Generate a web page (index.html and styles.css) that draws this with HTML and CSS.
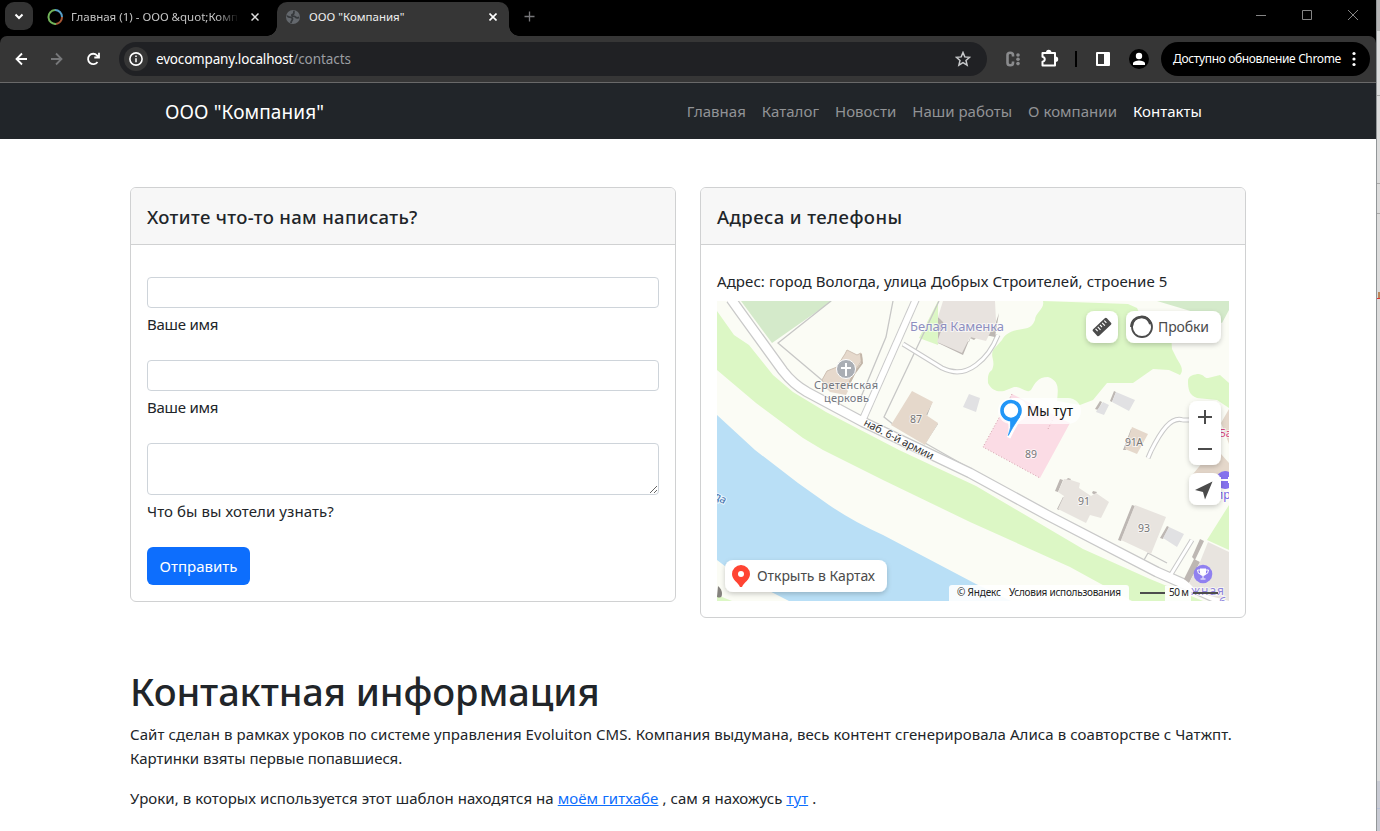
FILE: index.html
```html
<!DOCTYPE html>
<html lang="ru">
<head>
<meta charset="utf-8">
<title>ООО "Компания"</title>
<link rel="stylesheet" href="styles.css">
</head>
<body>
<div class="desktop">
<div class="window">
  <div class="tabstrip">
    <div class="tab-search"><svg width="12" height="12" viewBox="0 0 12 12"><path d="M2.500 4.500 6 8l3.500-3.500" fill="none" stroke="#fff" stroke-width="2"/></svg></div>
    <div class="tab tab-idle">
      <svg width="16" height="16" viewBox="0 0 16 16" fill="none" stroke-width="2"><path d="M8 1a7 7 0 0 1 7 7" stroke="#579fc9"/><path d="M15 8a7 7 0 0 1-6 7" stroke="#a75736"/><path d="M9 15A7 7 0 1 1 8 1" stroke="#72b45a"/></svg>
      <span class="tab-title faded">Главная (1) - ООО &amp;quot;Комп</span>
      <svg class="close" width="8" height="8" viewBox="0 0 8 8"><path d="m.5.5 7 7m0-7-7 7" stroke="#ddd" stroke-width="1.500"/></svg>
    </div>
    <div class="tab tab-active">
      <svg width="14" height="14" viewBox="0 0 14 14"><circle cx="7" cy="7" r="7" fill="#64686d"/><path d="M.8 6.200c1.200-.2 1.800 1 3 1s2.700.3 2.700 1.800-1.500 1.500-1.500 4M8.500 1C7 2 8.500 3 7.500 4s-2 .5-1.500 1.500 2.500 0 3.500 1.500 2 .8 3.700.5" fill="none" stroke="#36393c" stroke-width="1.800"/></svg>
      <span class="tab-title">ООО "Компания"</span>
      <svg class="close" width="8" height="8" viewBox="0 0 8 8"><path d="m.5.5 7 7m0-7-7 7" stroke="#fff" stroke-width="1.600"/></svg>
    </div>
    <svg class="new-tab" width="11" height="11" viewBox="0 0 11 11"><path d="M5.500.5v10M.5 5.500h10" stroke="#77777a" stroke-width="1.300"/></svg>
    <svg class="window-buttons" width="104" height="12" viewBox="0 0 104 12" fill="none" stroke="#858585"><path d="M0 6.500h10M46.500 1.500h9v9h-9zM92 1l10 10m0-10L92 11"/></svg>
  </div>

  <div class="toolbar-back"><div class="toolbar">
    <svg class="nav-icons" width="88" height="16" viewBox="0 0 88 16" fill="none" stroke-width="1.800">
      <path d="M12 8H1.500M7 2.500 1.500 8 7 13.500" stroke="#fff"/>
      <path d="M36 8h10.500M41 2.500 46.500 8 41 13.500" stroke="#77787a"/>
      <path d="M82.500 11A5.200 5.200 0 1 1 82 4.300l1.500 1.700M84 1.800v4.700h-4.700" stroke="#fff"/>
    </svg>
    <div class="omnibox">
      <span class="site-info"><svg width="14" height="14" viewBox="0 0 14 14"><circle cx="7" cy="7" r="6.100" fill="none" stroke="#fff" stroke-width="1.600"/><path d="M7 6.200v4M7 3.500v1.400" stroke="#fff" stroke-width="1.500"/></svg></span>
      <span class="url">evocompany.localhost<i>/contacts</i></span>
      <svg class="star" width="16" height="16" viewBox="0 0 16 16"><path d="m8 1.500 1.800 4.400 4.800.4L11 9.400l1.100 4.700L8 11.600l-4.100 2.500L5 9.400 1.400 6.300l4.800-.4z" fill="none" stroke="#c7c9cb" stroke-width="1.500"/></svg>
    </div>
    <svg class="extensions" width="152" height="22" viewBox="1000 48 152 22" fill="none">
      <path d="M1013 56.500v-1.500c0-3-5.500-3-5.500 0v8c0 3 5.500 3 5.500 0v-1.500" stroke="#8a8b8d" stroke-width="2.600"/>
      <g fill="#8a8b8d"><circle cx="1018" cy="55" r="1.800"/><circle cx="1018" cy="59.300" r="1.800"/><circle cx="1018" cy="63.600" r="1.800"/></g>
      <path d="M1042.500 53h12.500v12.500h-12.500v-3.700c3-.5 3-4.500 0-5z" stroke="#fff" stroke-width="2" stroke-linejoin="round"/>
      <path d="M1046 52.500a2.700 2.700 0 0 1 5.400 0zM1055.500 56.500a2.700 2.700 0 0 1 0 5.400z" fill="#fff"/>
      <path d="M1076 51v16" stroke="#000" stroke-width="2"/>
      <path d="M1097 53h12v12h-12z" stroke="#fff" stroke-width="2" stroke-linejoin="round"/><path d="M1104 53h5v12h-5z" fill="#fff"/>
      <circle cx="1139" cy="59" r="10" fill="#000"/><circle cx="1139" cy="56" r="3.200" fill="#fff"/><path d="M1133 65v-2c1-3.500 11-3.500 12 0v2z" fill="#fff"/>
    </svg>
    <div class="update"><span>Доступно обновление Chrome</span><svg width="4" height="16" viewBox="0 0 4 16" fill="#fff"><circle cx="2" cy="2.500" r="1.600"/><circle cx="2" cy="8" r="1.600"/><circle cx="2" cy="13.500" r="1.600"/></svg></div>
  </div></div>

  <header class="navbar">
    <a class="brand">ООО "Компания"</a>
    <nav><a>Главная</a><a>Каталог</a><a>Новости</a><a>Наши работы</a><a>О компании</a><a class="current">Контакты</a></nav>
  </header>

  <main>
    <div class="cards">
      <section class="card">
        <h5>Хотите что-то нам написать?</h5>
        <form class="card-body">
          <div class="field"><input type="text"><label>Ваше имя</label></div>
          <div class="field"><input type="text"><label>Ваше имя</label></div>
          <div class="field"><textarea></textarea><label class="question">Что бы вы хотели узнать?</label></div>
          <button type="button">Отправить</button>
        </form>
      </section>
      <section class="card">
        <h5 class="addresses">Адреса и телефоны</h5>
        <div class="card-body">
          <p class="address">Адрес: город Вологда, улица Добрых Строителей, строение 5</p>
          <svg class="map" width="512" height="300" viewBox="717 301 512 300">
            <defs><filter id="shadow" x="-20%" y="-30%" width="140%" height="170%"><feDropShadow dx="0" dy="2" stdDeviation="2.500" flood-opacity=".2"/></filter></defs>
            <path d="M717 301h512v300H717z" fill="#fbfcf5"/>
            <!-- parks and grass -->
            <path d="m741 301 31 42 60-42zM1157 301l40 12 25 10 7-13v-9z" fill="#d4eaca"/>
            <path d="m717 311 17 24 15 10 24 30 20 17 33 20 73 38 77 36 107 63 67 30 53 22h-71l-62-34-100-45-87-42-60-30-20-12-47-35-39-33z" fill="#dcf7c5"/>
            <path d="M1043 301c2 8-8 12-8 19-4 10-10 8-18 10-9 2-13 6-15 10l-9 10c-3 8 3 10-1 20-5 3-4 10-4 13 4 8 10 9 16 8l10-4c7-1 13 7 17 3 4-7 7-13 17-13 12 4 10 13 9 24l23 4 13-5 14-17h26l20-14 16 1 11 5c5-6-1-12-4-18l-4-8-2-29-27 1-6-13-9-4zM938 301l-19 37 19 7zM1197 374c6-1 8 5 11 4l12-3 9 8v25l-12-8-20-2c-8-3-9-9-9-17 0-5 5-6 9-7zM1229 505l-22 35 22 10z" fill="#dcf7c5"/>
            <!-- river -->
            <path d="m717 415 38 35 43 33 31 22q25 17 54 30l93 49 35 17H789l-55-28-17-13z" fill="#b9dff6"/>
            <path d="m717 595 15 6h-15z" fill="#dcf7c5"/>
            <!-- lanes and paths -->
            <g fill="none" stroke="#c7c7c6" stroke-width="1.300">
              <path d="m831 301-53 42 45 38M893 301l-7 36-25 60M939 301l-55 116 10 8M925 443l51 29 71 42M1144 560l4-7 19 10" />
            </g>
            <g fill="none" stroke-linejoin="round">
              <g stroke="#c9c9c9">
                <path d="m731 299 10 14 42 58q10 13 24 21l56 30 107 51 77 42 110 57 77 34" stroke-width="11"/>
                <path d="m916 299-53 120" stroke-width="8"/><path d="m903 344 39 24q18 9 34-3 14-10 22-30M1151 451c10-20 20-35 32-31h8M1170 576l22-36M1151 451l-3 7" stroke-width="5"/>
              </g>
              <g stroke="#fff">
                <path d="m731 299 10 14 42 58q10 13 24 21l56 30 107 51 77 42 110 57 77 34" stroke-width="8.500"/>
                <path d="m916 299-53 120" stroke-width="6"/><path d="m903 344 39 24q18 9 34-3 14-10 22-30M1151 451c10-20 20-35 32-31h8M1170 576l22-36M1151 451l-3 7" stroke-width="3"/>
              </g>
            </g>
            <!-- buildings -->
            <g fill="#bdb7b3">
              <path d="m938 317 6 4-6 23v-3zM938 343l25 12 7-17 4 2 6-6 15 3 4-24-5 15-19-3-6 17-22-8z"/>
              <path d="m1055 491 5-12 3 1-5 12zM1057 509l6-12 2 1-6 12zM1066 480l2-2 3 1-2 3zM1092 493l1-2 4 1-2 3zM1118 540l14-35 3 1-14 35zM1160 538l7-12 2 1-6 12zM1192 557l8-18 4 2-9 19zM1184 579l10-20 6 3-11 21z"/>
              <path d="m1110 401 4-10 2 1-4 10zM1095 409l5-8 2 1-4 8zM1123 450l8-21 2 1-7 20zM932 403l1-2-7 13 1 2zM925 444l13-20v-1l-14 22z"/>
            </g>
            <path d="m943 301-5 16 6 6-7 19 25 11 8-16 16 4 10-20-1-20z" fill="#e8e3df"/>
            <path d="m847 350 10 5 4-2 1 7-8 12-9 20-17-3-6-9 5-9 10-4 6-10 2-3z" fill="#e6d9cc" stroke="#cfc1b4"/>
            <path d="m824 379 14 1 10 11-2 4-16-3-6-6z" fill="#e6d9cc"/>
            <path d="m861 354 1 9-8 11-5 10" fill="none" stroke="#c3b6a9" stroke-width="2"/>
            <path d="m912 391 21 11-7 13 12 8-13 22-34-20z" fill="#e5d8cb"/>
            <path d="m1132 427 16 7-11 20-12-5z" fill="#e5d8cb"/>
            <path d="m963 407 6-13 11 4-4 14zM1112 402l4-10 19 8-6 11zM1097 410l6-8 6 3-5 10-8-3zM1163 538l6-11 15 7-7 13z" fill="#e1e1e3"/>
            <path d="m1058 492 6-13 7 1 9 3-1 5 12 8 5-3 13 9-8 16-11-3-4 8-28-14 6-13zM1121 540l14-35 31 12-15 37zM1200 562l8-20 21 10v49l-30-8-10-10z" fill="#e8e4df"/>
            <path d="m1221 423 8-14v35zM1193 474l10-12 18-8 8 9v22z" fill="#e5d8cb"/>
            <path d="m1012 394 58 29-30 55-57-31 17-31z" fill="#fbdce5"/><path d="m1012 394-12 22-17 31 57 31M1048 429l7-14" fill="none" stroke="#d4a1ac" stroke-dasharray="1 2"/>
            <!-- map labels -->
            <circle cx="846" cy="369" r="9.500" fill="#aaaeb4" stroke="#fff"/><path d="M846 363v13m-5-8h10" stroke="#fff" stroke-width="2"/>
            <g class="map-label">
              <text x="910" y="331" font-size="13" textLength="94" fill="#8e8fc0">Белая Каменка</text>
              <text x="814" y="389" font-size="11" textLength="64" fill="#72767e">Сретенская</text>
              <text x="824" y="402" font-size="11" textLength="45" fill="#72767e">церковь</text>
              <text x="910" y="423" font-size="10.500" fill="#777">87</text>
              <text x="1025" y="458" font-size="10.500" fill="#777">89</text>
              <text x="1078" y="505" font-size="10.500" fill="#777">91</text>
              <text x="1138" y="532" font-size="10.500" fill="#777">93</text>
              <text x="1125" y="446" font-size="10.500" textLength="18" fill="#777">91А</text>
              <text x="863" y="425" font-size="11" textLength="77" fill="#333" transform="rotate(27 863 425)">наб. 6-й армии</text>
              <text x="713" y="498" font-size="11" fill="#4672ae" transform="rotate(30 713 498)">да</text>
              <text x="1219" y="437" font-size="11" fill="#d6477d">Ба</text>
              <text x="1216" y="499" font-size="12" fill="#7463e4">пр</text>
              <text x="1191" y="595" font-size="12" textLength="33" fill="#8e84db">жная</text>
              <text x="1219" y="607" font-size="12" fill="#8e84db">б</text>
            </g>
            <circle cx="1225" cy="480" r="9" fill="#8572ed"/><path d="M1220 477v6m9-6v6m-9-3h9" stroke="#fff" stroke-width="2"/>
            <circle cx="1203" cy="574" r="9.300" fill="#9080f0"/><path d="M1200 568.500h6v4.500q-.5 3-3 3t-3-3z" fill="#fff"/><path d="M1200 570h-2.500q0 4 3.500 4.500m5-4.500h2.500q0 4-3.500 4.500M1203 576v2.500m-2.500.5h5" fill="none" stroke="#fff"/>
            <path d="M718 586q4 3 4 8t-5 3z" fill="#85827e"/>
            <!-- placemark -->
            <rect x="998" y="398" width="83" height="26" rx="13" fill="#fff" fill-opacity=".78"/>
            <path d="M1011 399.500a11 11 0 0 0-2.500 21.700l.5 1.800q1 7-1 13.500l2 1q4-9 9.500-17A11 11 0 0 0 1011 399.500z" fill="#fff" stroke="#fff" stroke-width="1.500"/>
            <circle cx="1011" cy="410.500" r="9" fill="#fff" stroke="#2196f7" stroke-width="3.600"/><path d="M1010.500 420.500q1 7-2.200 15 4-8 11.200-18.500z" fill="#2196f7" stroke="#2196f7" stroke-width=".8"/>
            <text class="ui" x="1027" y="416" font-size="13.500" textLength="46" fill="#111">Мы тут</text>
            <!-- controls -->
            <g fill="#fff" filter="url(#shadow)"><rect x="1086" y="311" width="32" height="32" rx="8"/><rect x="1126" y="311" width="95" height="32" rx="8"/><rect x="1189" y="401" width="32" height="64" rx="8"/><rect x="1189" y="473" width="32" height="32" rx="8"/><rect x="725" y="560" width="162" height="32" rx="8"/></g>
            <g transform="rotate(-43 1102 327)"><rect x="1092.500" y="322.500" width="19" height="9" rx="1.500" fill="#4b4b4b"/><path d="M1096 324v3m3-3v4m3-4v3m3-3v4m3-4v3" stroke="#fff" stroke-width="1.100"/></g>
            <circle cx="1142" cy="327" r="10" fill="none" stroke="#4b4b4b" stroke-width="1.800"/><path d="M1131.500 327c0-6 4-9.500 9-10 4-.5 8 1.500 10 7" fill="none" stroke="#4b4b4b" stroke-width="2.700"/>
            <text class="ui" x="1158" y="332" font-size="14" textLength="51" fill="#4b4b4b">Пробки</text>
            <path d="M1198 417h14m-7-7v14M1198 449h14" stroke="#4b4b4b" stroke-width="2"/><path d="m1212.500 481.500-17.500 8.500 8 2 2 7.500z" fill="#4b4b4b"/>
            <path d="M741 565a9 9 0 0 0-9 9c0 6 6 8 8 13h2c2-5 8-7 8-13a9 9 0 0 0-9-9z" fill="#ff4433"/><circle cx="741" cy="574" r="3" fill="#fff"/>
            <text class="ui" x="757" y="581" font-size="14" textLength="118" fill="#4b4b4b">Открыть в Картах</text>
            <path d="M949 601v-13q0-3 3-3h174q3 0 3 3v13zM1165 586h26v15h-26z" fill="#fff" fill-opacity=".9"/>
            <g class="ui" font-size="10" fill="#222"><text x="957" y="596" textLength="44">© Яндекс</text><text x="1009" y="596" textLength="112">Условия использования</text><text x="1169" y="596" textLength="20">50 м</text></g>
            <path d="M1140 593h25m28 0h25" stroke="#4d4d4d" stroke-width="1.800"/>
          </svg>
        </div>
      </section>
    </div>
    <h1>Контактная информация</h1>
    <p class="copy"><span class="line-one">Сайт сделан в рамках уроков по системе управления Evoluiton CMS. Компания выдумана, весь контент сгенерировала Алиса в соавторстве с Чатжпт.</span><br><span class="line-two">Картинки взяты первые попавшиеся.</span></p>
    <p class="copy line-three">Уроки, в которых используется этот шаблон находятся на <a>моём гитхабе</a> , сам я нахожусь <a>тут</a> .</p>
  </main>
</div>
<aside class="behind"><svg width="4" height="831" viewBox="0 0 4 831"><path d="M0 0h4v831H0z" fill="#dcdcdc"/><path d="M0 0h4v31H0z" fill="#b5b5b5"/><path d="M0 781h4v50H0z" fill="#c8cad3"/><path d="M0 95.500h4M0 183.500h4M0 213.500h4" stroke="#aaa"/><path d="M2 292h2v6H2z" fill="#bd875b"/><path d="M0 298.500h4" stroke="#d33"/><path d="M0 808.500h4" stroke="#b5bed6"/><path d="M.5 0v831" stroke="#929698"/></svg></aside>
</div>
</body>
</html>
```
FILE: styles.css
```css
* { box-sizing: border-box; }
body { margin: 0; font: 15px/24px "Noto Sans", "Open Sans", sans-serif; color: #212529; background: #fff; overflow: hidden; }
svg { display: block; flex: none; }
.desktop { display: flex; width: 1380px; height: 831px; overflow: hidden; }
.window { width: 1376px; flex: none; }
.behind { width: 4px; }

.tabstrip { display: flex; height: 36px; background: #000; color: #eee; font-size: 11.5px; align-items: flex-start; }
.tab-search { width: 28px; height: 28px; margin: 2px 0 0 5px; border-radius: 9px; background: #333; display: grid; place-items: center; }
.tab { display: flex; align-items: center; height: 34px; margin-top: 2px; padding-bottom: 5px; white-space: nowrap; }
.tab-idle { width: 244px; padding-left: 14px; color: #c5c5c5; }
.tab-title { margin-left: 8px; }
.faded { width: 168px; overflow: hidden; -webkit-mask-image: linear-gradient(90deg, #000 145px, transparent 168px); mask-image: linear-gradient(90deg, #000 145px, transparent 168px); letter-spacing: 0; }
.tab-idle .close { margin-left: 12px; }
.tab-active { position: relative; width: 232px; padding-left: 9px; padding-right: 12px; background: #363636; border-radius: 10px 10px 0 0; }
.tab-active::before, .tab-active::after { content: ""; position: absolute; bottom: 0; width: 10px; height: 10px; }
.tab-active::before { left: -10px; background: radial-gradient(circle at 0 0, transparent 9.500px, #363636 10px); }
.tab-active::after { right: -10px; background: radial-gradient(circle at 100% 0, transparent 9.500px, #363636 10px); }
.tab-active .tab-title { letter-spacing: 0; margin-left: 9px; }
.tab-active .close { margin-left: auto; }
.new-tab { margin: 11px 0 0 15px; }
.window-buttons { margin: 9px 16px 0 auto; }

.toolbar-back { background: #000; }
.toolbar { display: flex; align-items: center; height: 47px; background: #363636; border-bottom: 1px solid #696969; border-radius: 7px 7px 0 0; }
.nav-icons { margin-left: 15px; }
.omnibox { display: flex; align-items: center; width: 868px; height: 34px; margin-left: 16px; padding: 0 16px 0 5px; border-radius: 17px; background: #202124; color: #fff; font-size: 13.5px; }
.site-info { display: grid; place-items: center; width: 24px; height: 24px; border-radius: 50%; background: #363636; }
.url { margin-left: 8px; letter-spacing: -.18px; }
.url i { color: #9a9da1; font-style: normal; letter-spacing: -.08px; }
.star { margin-left: auto; }
.extensions { margin-left: 13px; }
.update { display: flex; align-items: center; justify-content: space-between; width: 209px; height: 34px; margin-left: 9px; padding: 0 14px 0 12px; border-radius: 17px; background: #000; color: #fff; font-size: 12px; white-space: nowrap; }
.update span { letter-spacing: -.35px; }

.navbar { display: flex; align-items: center; justify-content: space-between; height: 56px; padding: 0 174px 0 165px; background: #212529; }
.brand { color: #fff; font-size: 19px; letter-spacing: .1px; padding-top: 1px; }
nav { display: flex; gap: 16px; color: #919396; letter-spacing: .02px; }
.current { color: #fff; }

main { padding: 48px 130px 0; }
.cards { display: grid; grid-template-columns: 546px 546px; gap: 24px; align-items: start; }
.card { border: 1px solid #d0d1d2; border-radius: 6px; overflow: hidden; }
.card h5 { margin: 0; height: 57px; padding: 17px 16px; background: #f7f7f7; border-bottom: 1px solid #d0d1d2; font-size: 18.5px; line-height: 24px; font-weight: 500; letter-spacing: .35px; }
.card h5.addresses { letter-spacing: .42px; }
.card-body { padding: 24px 16px 16px; }
form.card-body { padding-top: 32px; }
.field { display: flex; flex-direction: column; margin-bottom: 24px; }
input, textarea { display: block; width: 512px; height: 31px; border: 1px solid #ced4da; border-radius: 4px; background: #fff; font: inherit; }
textarea { height: 52px; resize: vertical; }
label { height: 24px; margin-top: 4px; letter-spacing: -.25px; }
.question { letter-spacing: .08px; }
button { display: block; width: 103px; height: 38px; border: 0; border-radius: 6px; padding: 0; background: #0d6efd; color: #fff; font: inherit; }
.address { margin: 0 0 8px; white-space: nowrap; letter-spacing: .08px; }
.map { overflow: hidden; }
.map text { font-family: "Noto Sans", sans-serif; }
.map-label { paint-order: stroke; stroke: #fff; stroke-opacity: .65; stroke-width: 2px; }
h1 { margin: 49px 0 0; font-size: 38px; line-height: 48px; font-weight: 500; white-space: nowrap; letter-spacing: -.1px; }
.copy { margin: 7px 0 16px; white-space: nowrap; }
.copy a { color: #0d6efd; text-decoration: underline; }
.line-one { letter-spacing: .073px; }
.line-two { letter-spacing: -.03px; }
.line-three { letter-spacing: .065px; }
```
